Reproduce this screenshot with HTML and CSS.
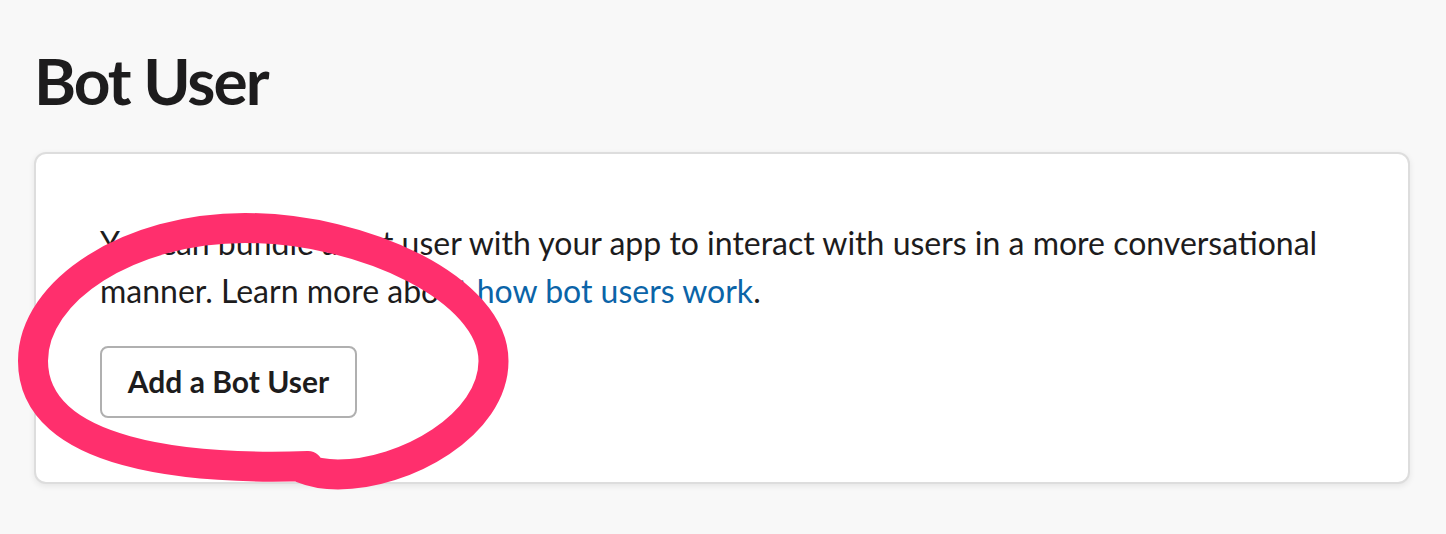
FILE: index.html
```html
<!DOCTYPE html>
<html lang="en">
<head>
<meta charset="utf-8">
<title>Bot User</title>
<link rel="stylesheet" href="styles.css">
</head>
<body>
<main class="page">
<h1 class="title">Bot User</h1>
<section class="card">
<p class="copy">You can bundle a bot user with your app to interact with users in a more conversational<br>manner. Learn more about <a class="link" href="#">how bot users work</a>.</p>
<button class="button" type="button">Add a Bot User</button>
</section>
</main>
<svg class="marker" viewBox="0 0 1446 534" aria-hidden="true"><path d="M308 466C190 470 33 456 33 361C33 290 130 228 245 228C365 228 493.5 290 493.5 361C493.5 425 405 474.5 338 474.5C326 474.5 312 472 302 468"/></svg>
</body>
</html>
```
FILE: styles.css
```css
* { box-sizing: border-box; }
body { margin: 0; background: #f8f8f8; color: #1d1c1d; font-family: Lato, sans-serif; }
.page { height: 534px; padding: 43px 36px 0 34px; }
.title { margin: 0 0 33px; font-size: 64px; line-height: 76px; font-weight: 700; letter-spacing: -2px; }
.card { height: 332px; padding: 65px 64px; background: #fff; border: 2px solid #ddd; border-radius: 12px; box-shadow: 0 2px 6px rgba(0,0,0,.08); }
.copy { margin: 0 0 31px; font-size: 32px; line-height: 48px; white-space: nowrap; }
.link { color: #0b64a8; text-decoration: none; }
.button { display: block; width: 257px; height: 72px; padding: 0 0 2px; background: #fff; border: 2px solid #b0b0b0; border-radius: 8px; color: #1d1c1d; font: 700 30px Lato, sans-serif; }
.marker { position: absolute; inset: 0; width: 1446px; height: 534px; pointer-events: none; }
.marker path { fill: none; stroke: #ff2f6d; stroke-width: 30; stroke-linecap: round; stroke-linejoin: round; }
```
